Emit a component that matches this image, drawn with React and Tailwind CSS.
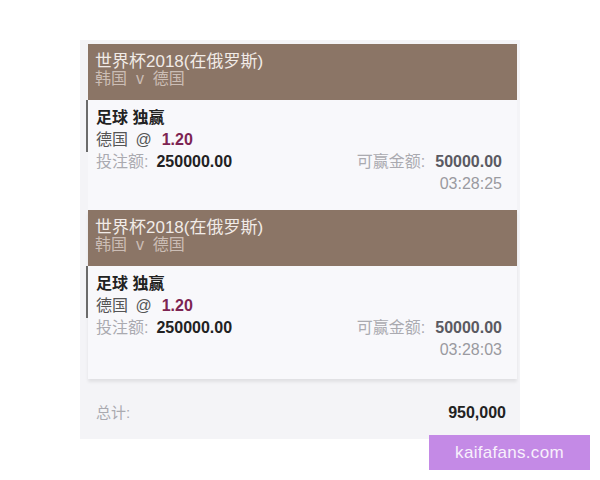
import React from 'react';

const bets = [
    { time: '03:28:25' },
    { time: '03:28:03' },
];

const BetCard = ({ time, last }) => (
    <div className={`bg-[#f8f8fb] ${last ? 'shadow-[0_3px_3px_rgba(0,0,0,0.08)]' : ''}`}>
        <div className="bg-[#8b7566] h-[56px] pl-[7px] pt-[9px]">
            <div className="text-[17px] leading-[17px] text-[#f1ebe7]">世界杯2018(在俄罗斯)</div>
            <div className="text-[16px] leading-[17px] text-[#cbbdb5]">韩国 &nbsp;v&nbsp; 德国</div>
        </div>
        <div className={`relative pl-[8px] pr-[15px] pt-[7px] ${last ? 'h-[113px]' : 'h-[110px]'}`}>
            <div className="absolute left-[-2px] top-0 w-[2px] h-[52px] bg-[#6b6b6b]" />
            <div className="text-[16px] leading-[22px] font-bold text-[#222]">足球 独赢</div>
            <div className="text-[16px] leading-[22px] text-[#555]">
                德国 <span className="ml-[3px]">@</span>
                <span className="ml-[10px] font-bold text-[#7d2452]">1.20</span>
            </div>
            <div className="flex justify-between text-[16px] leading-[22px]">
                <div>
                    <span className="text-[#aaaab0]">投注额:</span>
                    <span className="ml-[8px] font-bold text-[#222]">250000.00</span>
                </div>
                <div>
                    <span className="text-[#aaaab0]">可赢金额:</span>
                    <span className="ml-[10px] font-bold text-[#5a5a62]">50000.00</span>
                </div>
            </div>
            <div className="text-right text-[16px] leading-[22px] text-[#9a9aa0]">{time}</div>
        </div>
    </div>
);

export default function App() {
    return (
        <div className="relative w-[600px] h-[480px] bg-white font-['Liberation_Sans','Noto_Sans_CJK_SC',sans-serif]">
            <div className="absolute left-[80px] top-[40px] w-[440px] h-[399px] bg-[#f4f4f7] pl-[8px] pr-[3px] pt-[4px]">
                {bets.map((b, i) => (
                    <BetCard key={i} time={b.time} last={i === bets.length - 1} />
                ))}
                <div className="flex justify-between items-center mt-[22px] pl-[8px] pr-[11px]">
                    <span className="text-[15px] text-[#aaaab0]">总计:</span>
                    <span className="text-[16px] font-bold text-[#222]">950,000</span>
                </div>
            </div>
            <div className="absolute left-[429px] top-[435px] w-[161px] h-[35px] bg-[#c48ae6] flex items-center justify-center text-[17px] text-[#f8f0fc] tracking-[0.3px]">
                kaifafans.com
            </div>
        </div>
    );
}
